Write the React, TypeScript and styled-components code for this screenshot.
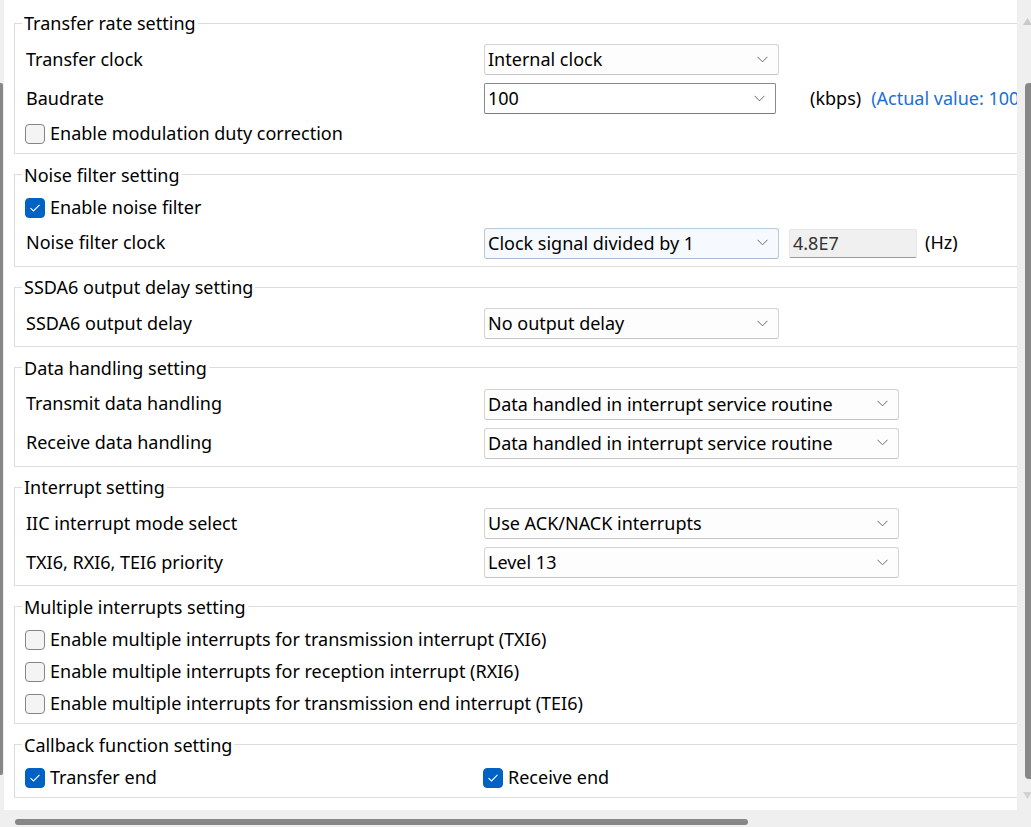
import React from "react";
import styled, { createGlobalStyle } from "styled-components";

const GlobalStyle = createGlobalStyle`
  html, body { margin: 0; padding: 0; background: #efefef; overflow: hidden; }
  body { font-family: "Noto Sans", "Open Sans", sans-serif; color: #000; }
  * { box-sizing: border-box; }
`;

const Window = styled.div`
  width: 1031px;
  height: 827px;
  display: grid;
  grid-template-columns: 4px 1013px 14px;
  grid-template-rows: 810px 17px;
  background: #efefef;
  overflow: hidden;
`;

const LeftGutter = styled.div`
  padding-top: 83px;
`;

const LeftThumb = styled.div`
  width: 3px;
  height: 692px;
  background: #878787;
  border-radius: 0 2px 2px 0;
`;

const Panel = styled.div`
  background: #fff;
  overflow: hidden;
  padding: 12px 0 0 10px;
`;

const RightTrack = styled.div`
  display: flex;
  flex-direction: column;
  align-items: flex-start;
  padding: 18px 0 0 6px;
`;

const Arrow = styled.svg<{ $gap?: number }>`
  display: block;
  flex: none;
  margin-top: ${(p) => p.$gap ?? 0}px;
`;

const RightThumb = styled.div`
  margin: 58px 0 0 2px;
  width: 10px;
  height: 696px;
  background: #878787;
  border-radius: 4px;
`;

const BottomTrack = styled.div`
  grid-column: 1 / 4;
  padding: 9px 0 0 15px;
`;

const BottomThumb = styled.div`
  width: 733px;
  height: 6px;
  background: #878787;
  border-radius: 3px;
`;

const Group = styled.fieldset`
  width: 1030px;
  min-width: 0;
  margin: 0 0 9.6px;
  padding: 10px 0 7px 11px;
  border: 1px solid #dcdcdc;
  display: flex;
  flex-direction: column;
  gap: 8px;
`;

const Legend = styled.legend`
  font-size: 18px;
  line-height: 22px;
  padding: 0 2px;
  margin-left: -4px;
`;

const Row = styled.div<{ $tall?: boolean }>`
  display: grid;
  grid-template-columns: 458px auto;
  align-items: center;
  height: ${(p) => (p.$tall ? "31px" : "24px")};
  font-size: 18px;
  white-space: nowrap;
`;

const Label = styled.span`
  line-height: 22px;
  margin-bottom: 2px;
`;

const Cell = styled.div`
  display: flex;
  align-items: center;
  height: 100%;
`;

const Combo = styled.div<{ $w: number; $editable?: boolean; $focus?: boolean }>`
  width: ${(p) => p.$w}px;
  height: 31px;
  display: flex;
  align-items: center;
  justify-content: space-between;
  padding: 0 10px 1px 3px;
  border: 1px solid
    ${(p) => (p.$editable ? "#8a8a8a" : p.$focus ? "#b9c9dc" : "#d4d4d4")};
  border-bottom-color: ${(p) =>
    p.$editable ? "#7a7a7a" : p.$focus ? "#a9bbd2" : "#c4c4c4"};
  border-radius: ${(p) => (p.$editable ? "2px" : "3px")};
  background: ${(p) => (p.$focus ? "#f6f9fd" : p.$editable ? "#fff" : "#fdfdfd")};
  font-size: 18px;
  line-height: 22px;
`;

const Chevron = styled.svg`
  display: block;
  flex: none;
`;

const TextBox = styled.div`
  margin-left: 10px;
  width: 128px;
  height: 29px;
  display: flex;
  align-items: center;
  padding: 0 0 1px 3px;
  background: #f0f0f0;
  border: 1px solid #e6e6e6;
  border-bottom-color: #9a9a9a;
  border-radius: 2px;
  color: #333;
  font-size: 18px;
`;

const Unit = styled.span<{ $gap: number }>`
  margin-left: ${(p) => p.$gap}px;
  margin-bottom: 2px;
`;

const Info = styled.span`
  margin-left: 10px;
  margin-bottom: 2px;
  color: #1a6fd6;
`;

const CheckLine = styled.label`
  display: flex;
  align-items: center;
  gap: 5px;
  height: 24px;
  font-size: 18px;
  line-height: 22px;
  white-space: nowrap;
  margin-left: -1px;
`;

const CheckText = styled.span`
  margin-bottom: 2px;
`;

const Box = styled.span<{ $on?: boolean }>`
  width: 20px;
  height: 20px;
  flex: none;
  border-radius: 4px;
  display: flex;
  align-items: center;
  justify-content: center;
  background: ${(p) => (p.$on ? "#0063c4" : "#f4f4f4")};
  border: 1px solid ${(p) => (p.$on ? "#0063c4" : "#858585")};
`;

const ChevronIcon = () => (
  <Chevron width="11" height="7" viewBox="0 0 11 7">
    <path d="M0.5 0.8 L5.5 5.8 L10.5 0.8" fill="none" stroke="#6a6a6a" strokeWidth="1" />
  </Chevron>
);

const Select = ({
  value,
  w = 295,
  editable,
  focus,
}: {
  value: string;
  w?: number;
  editable?: boolean;
  focus?: boolean;
}) => (
  <Combo $w={w} $editable={editable} $focus={focus}>
    <span>{value}</span>
    <ChevronIcon />
  </Combo>
);

const Check = ({ on, children }: { on?: boolean; children: React.ReactNode }) => (
  <CheckLine>
    <Box $on={on}>
      {on && (
        <svg width="12" height="10" viewBox="0 0 12 10">
          <path d="M1.5 5.2 L4.5 8 L10.5 1.8" fill="none" stroke="#fff" strokeWidth="1.1" />
        </svg>
      )}
    </Box>
    <CheckText>{children}</CheckText>
  </CheckLine>
);

export default function App() {
  return (
    <>
      <GlobalStyle />
      <Window>
        <LeftGutter>
          <LeftThumb />
        </LeftGutter>
        <Panel>
          <Group>
            <Legend>Transfer rate setting</Legend>
            <Row $tall>
              <Label>Transfer clock</Label>
              <Cell>
                <Select value="Internal clock" />
              </Cell>
            </Row>
            <Row $tall>
              <Label>Baudrate</Label>
              <Cell>
                <Select value="100" w={292} editable />
                <Unit $gap={34}>(kbps)</Unit>
                <Info>(Actual value: 100 kbps)</Info>
              </Cell>
            </Row>
            <Check>Enable modulation duty correction</Check>
          </Group>

          <Group>
            <Legend>Noise filter setting</Legend>
            <Check on>Enable noise filter</Check>
            <Row $tall>
              <Label>Noise filter clock</Label>
              <Cell>
                <Select value="Clock signal divided by 1" focus />
                <TextBox>4.8E7</TextBox>
                <Unit $gap={8}>(Hz)</Unit>
              </Cell>
            </Row>
          </Group>

          <Group>
            <Legend>SSDA6 output delay setting</Legend>
            <Row $tall>
              <Label>SSDA6 output delay</Label>
              <Cell>
                <Select value="No output delay" />
              </Cell>
            </Row>
          </Group>

          <Group>
            <Legend>Data handling setting</Legend>
            <Row $tall>
              <Label>Transmit data handling</Label>
              <Cell>
                <Select value="Data handled in interrupt service routine" w={415} />
              </Cell>
            </Row>
            <Row $tall>
              <Label>Receive data handling</Label>
              <Cell>
                <Select value="Data handled in interrupt service routine" w={415} />
              </Cell>
            </Row>
          </Group>

          <Group>
            <Legend>Interrupt setting</Legend>
            <Row $tall>
              <Label>IIC interrupt mode select</Label>
              <Cell>
                <Select value="Use ACK/NACK interrupts" w={415} />
              </Cell>
            </Row>
            <Row $tall>
              <Label>TXI6, RXI6, TEI6 priority</Label>
              <Cell>
                <Select value="Level 13" w={415} />
              </Cell>
            </Row>
          </Group>

          <Group>
            <Legend>Multiple interrupts setting</Legend>
            <Check>Enable multiple interrupts for transmission interrupt (TXI6)</Check>
            <Check>Enable multiple interrupts for reception interrupt (RXI6)</Check>
            <Check>Enable multiple interrupts for transmission end interrupt (TEI6)</Check>
          </Group>

          <Group>
            <Legend>Callback function setting</Legend>
            <Row>
              <Check on>Transfer end</Check>
              <Check on>Receive end</Check>
            </Row>
          </Group>
        </Panel>
        <RightTrack>
          <Arrow width="9" height="7" viewBox="0 0 9 7">
            <path d="M4.5 0 L9 7 L0 7 Z" fill="#c9c9c9" />
          </Arrow>
          <RightThumb />
          <Arrow width="9" height="7" viewBox="0 0 9 7" $gap={13}>
            <path d="M0 0 L9 0 L4.5 7 Z" fill="#d2d2d2" />
          </Arrow>
        </RightTrack>
        <BottomTrack>
          <BottomThumb />
        </BottomTrack>
      </Window>
    </>
  );
}
